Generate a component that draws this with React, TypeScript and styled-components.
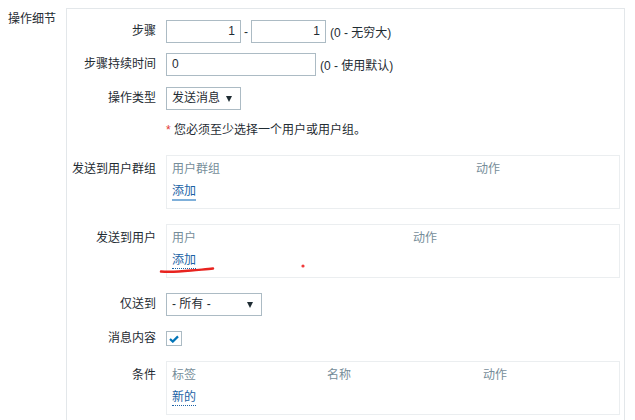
import React from "react";
import styled, { createGlobalStyle } from "styled-components";

const Global = createGlobalStyle`
  html, body { margin: 0; padding: 0; background: #ffffff; }
  body {
    font-family: "Liberation Sans", Arial, "Noto Sans CJK SC", sans-serif;
    font-size: 12px;
    color: #1f2c33;
  }
  * { box-sizing: border-box; }
`;

const Page = styled.div`
  display: flex;
  align-items: flex-start;
  padding: 8px 0 0 8px;
  width: 635px;
  height: 420px;
  overflow: hidden;
`;

const SectionLabel = styled.div`
  width: 58px;
  margin-top: 2px;
  line-height: 18px;
`;

const Panel = styled.div`
  width: 559px;
  border: 1px solid #e3e7ea;
  border-bottom: none;
  padding: 11px 0 40px 0;
  display: flex;
  flex-direction: column;
`;

const Row = styled.div<{ $mb?: number }>`
  display: flex;
  align-items: flex-start;
  margin-bottom: ${(p) => p.$mb ?? 0}px;
`;

const Label = styled.div<{ $top?: number; $lh?: number }>`
  width: 89px;
  margin-right: 10px;
  text-align: right;
  line-height: ${(p) => p.$lh ?? 23}px;
  padding-top: ${(p) => p.$top ?? 0}px;
  white-space: nowrap;
`;

const Controls = styled.div`
  display: flex;
  align-items: center;
  height: 23px;
`;

const TextInput = styled.div<{ $w: number; $right?: boolean }>`
  width: ${(p) => p.$w}px;
  height: 23px;
  border: 1px solid #acbbc4;
  background: #fff;
  line-height: 21px;
  padding: 0 5px;
  text-align: ${(p) => (p.$right ? "right" : "left")};
`;

const Dash = styled.span`
  width: 10px;
  text-align: center;
`;

const Hint = styled.span`
  margin-left: 4px;
  white-space: nowrap;
`;

const Select = styled.div<{ $w: number }>`
  position: relative;
  width: ${(p) => p.$w}px;
  height: 23px;
  border: 1px solid #acbbc4;
  background: #fff;
  line-height: 21px;
  padding: 0 20px 0 5px;
  white-space: nowrap;
  &::after {
    content: "";
    position: absolute;
    right: 8px;
    top: 8px;
    border-left: 3.5px solid transparent;
    border-right: 3.5px solid transparent;
    border-top: 6px solid #1f2c33;
  }
`;

const Message = styled.div`
  margin-left: 99px;
  line-height: 20px;
  white-space: nowrap;
`;

const Star = styled.span`
  color: #e33734;
`;

const Box = styled.div`
  position: relative;
  width: 454px;
  border: 1px solid #ebeef0;
  padding: 4px 5px 8px;
`;

const TableRow = styled.div<{ $cols: string }>`
  display: grid;
  grid-template-columns: ${(p) => p.$cols};
  line-height: 18px;
`;

const Th = styled.div`
  color: #768d99;
  white-space: nowrap;
`;

const LinkRow = styled.div`
  margin-top: 4px;
  line-height: 18px;
  height: 18px;
`;

const Link = styled.span<{ $hover?: boolean }>`
  color: #1b62a5;
  display: inline-block;
  line-height: 16px;
  border-bottom: ${(p) =>
    p.$hover ? "2px solid #7fb0da" : "1px dotted #1b62a5"};
`;

const Checkbox = styled.div`
  width: 16px;
  height: 15px;
  border: 1px solid #acbbc4;
  background: #fff;
  display: flex;
  align-items: center;
  justify-content: center;
`;

const Annotation = styled.svg`
  position: absolute;
  left: -8px;
  top: 38px;
  overflow: visible;
  pointer-events: none;
`;

export default function App() {
  return (
    <>
      <Global />
      <Page>
        <SectionLabel>操作细节</SectionLabel>
        <Panel>
          <Row $mb={10}>
            <Label>步骤</Label>
            <Controls>
              <TextInput $w={75} $right>1</TextInput>
              <Dash>-</Dash>
              <TextInput $w={75} $right>1</TextInput>
              <Hint>(0 - 无穷大)</Hint>
            </Controls>
          </Row>
          <Row $mb={11}>
            <Label>步骤持续时间</Label>
            <Controls>
              <TextInput $w={150}>0</TextInput>
              <Hint>(0 - 使用默认)</Hint>
            </Controls>
          </Row>
          <Row $mb={10}>
            <Label>操作类型</Label>
            <Controls>
              <Select $w={75}>发送消息</Select>
            </Controls>
          </Row>
          <Row $mb={15}>
            <Message>
              <Star>*</Star> 您必须至少选择一个用户或用户组。
            </Message>
          </Row>
          <Row $mb={15}>
            <Label $lh={18} $top={5}>发送到用户群组</Label>
            <Box>
              <TableRow $cols="304px 1fr">
                <Th>用户群组</Th>
                <Th>动作</Th>
              </TableRow>
              <LinkRow>
                <Link $hover>添加</Link>
              </LinkRow>
            </Box>
          </Row>
          <Row $mb={15}>
            <Label $lh={18} $top={5}>发送到用户</Label>
            <Box>
              <TableRow $cols="241px 1fr">
                <Th>用户</Th>
                <Th>动作</Th>
              </TableRow>
              <LinkRow>
                <Link>添加</Link>
              </LinkRow>
              <Annotation width="150" height="12" viewBox="0 0 150 12">
                <path
                  d="M2 8.5 C 12 9.5, 22 8.5, 32 7.5 S 48 6.5, 54 5.5"
                  stroke="#e8231f"
                  strokeWidth="2.5"
                  fill="none"
                  strokeLinecap="round"
                />
                <circle cx="144" cy="3" r="1.6" fill="#f03a3a" />
              </Annotation>
            </Box>
          </Row>
          <Row $mb={11}>
            <Label>仅送到</Label>
            <Controls>
              <Select $w={96}>- 所有 -</Select>
            </Controls>
          </Row>
          <Row $mb={11}>
            <Label>消息内容</Label>
            <Controls>
              <Checkbox>
                <svg width="10" height="8" viewBox="0 0 10 8">
                  <path
                    d="M1 4 L3.8 6.6 L9 1.4"
                    stroke="#0275b8"
                    strokeWidth="2.2"
                    fill="none"
                  />
                </svg>
              </Checkbox>
            </Controls>
          </Row>
          <Row>
            <Label $lh={18} $top={5}>条件</Label>
            <Box>
              <TableRow $cols="155px 156px 1fr">
                <Th>标签</Th>
                <Th>名称</Th>
                <Th>动作</Th>
              </TableRow>
              <LinkRow>
                <Link>新的</Link>
              </LinkRow>
            </Box>
          </Row>
        </Panel>
      </Page>
    </>
  );
}
